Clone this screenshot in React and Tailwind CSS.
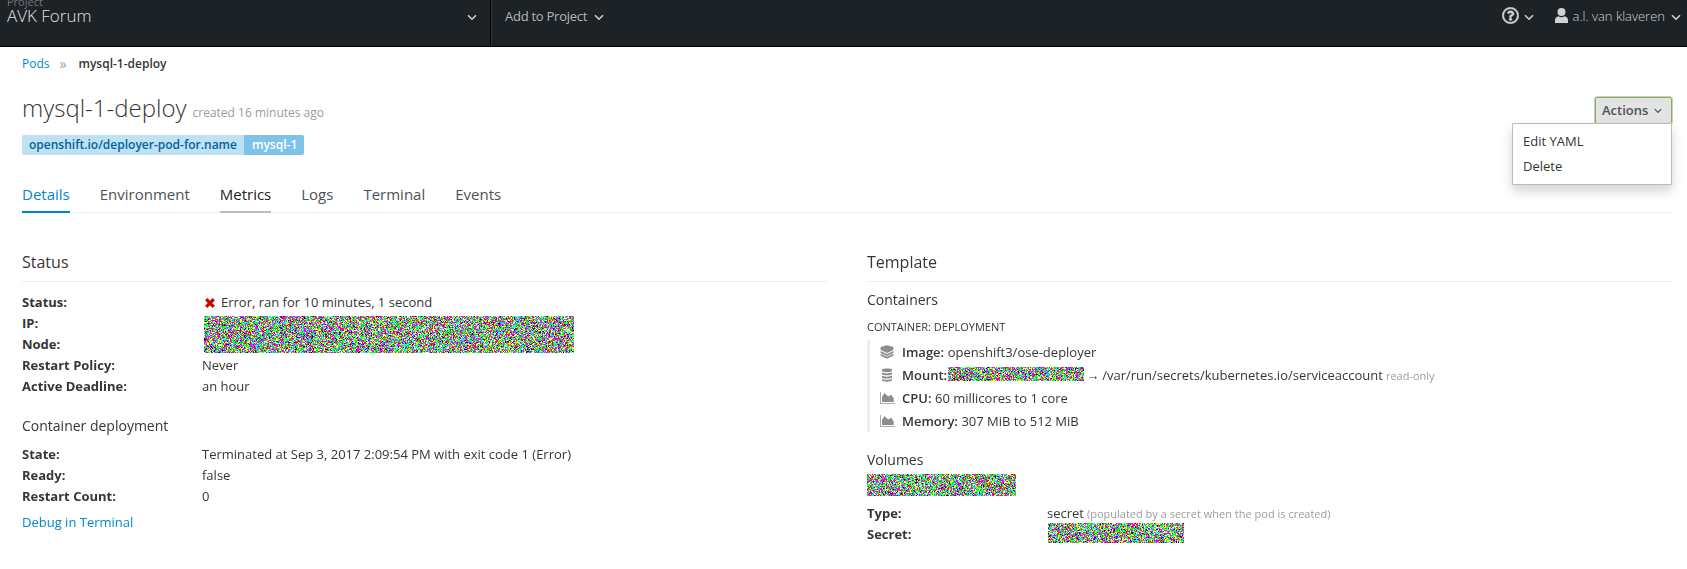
import { useEffect, useRef } from "react";
import { FaRegQuestionCircle } from "react-icons/fa";

const palette = [
  [0.24, 255, 0, 255],
  [0.46, 0, 255, 0],
  [0.65, 0, 255, 255],
  [0.79, 255, 255, 0],
  [0.88, 255, 0, 0],
  [0.92, 0, 0, 255],
  [0.99, 255, 255, 255],
  [1, 0, 0, 0],
];

function Noise({ width, height, seed, className = "" }) {
  const ref = useRef(null);
  useEffect(() => {
    const ctx = ref.current.getContext("2d");
    const image = ctx.createImageData(width, height);
    let state = seed;
    const next = () => {
      state = (Math.imul(state, 1664525) + 1013904223) >>> 0;
      return state / 4294967296;
    };
    for (let i = 0; i < image.data.length; i += 4) {
      const value = next();
      const color = palette.find((entry) => value < entry[0]);
      image.data[i] = color[1];
      image.data[i + 1] = color[2];
      image.data[i + 2] = color[3];
      image.data[i + 3] = 255;
    }
    ctx.putImageData(image, 0, 0);
  }, [width, height, seed]);
  return <canvas ref={ref} width={width} height={height} className={`block shrink-0 [image-rendering:pixelated] ${className}`} />;
}

function Chevron({ className = "h-[7px] w-[10px]" }) {
  return (
    <svg viewBox="0 0 10 7" className={`shrink-0 ${className}`} fill="none" stroke="currentColor" strokeWidth="1.6">
      <path d="M1 1.2 5 5.2 9 1.2" />
    </svg>
  );
}

function LayersIcon() {
  return (
    <svg viewBox="0 0 14 14" className="h-[14px] w-[14px]" fill="#8b8d8f">
      <path d="M7 .2 13.400 2v3L7 7.900.600 5V2z" />
      <path d="M.600 6 7 9l6.400-3v2L7 11 .600 8z" />
      <path d="M.600 8.800 7 11.800l6.400-3v2L7 13.800.600 10.800z" />
    </svg>
  );
}

function DatabaseIcon() {
  return (
    <svg viewBox="0 0 14 14" className="h-[14px] w-[14px]" fill="#8b8d8f">
      <path d="M2 1.500C2 0 12 0 12 1.500v1.600c0 1.400-10 1.400-10 0z" />
      <path d="M2 4.600c1.500 1.100 8.500 1.100 10 0v1.600c0 1.500-10 1.500-10 0z" />
      <path d="M2 7.800c1.500 1.100 8.500 1.100 10 0v1.600c0 1.500-10 1.500-10 0z" />
      <path d="M2 11c1.500 1.100 8.500 1.100 10 0v1.500c0 1.500-10 1.500-10 0z" />
    </svg>
  );
}

function ChartIcon() {
  return (
    <svg viewBox="0 0 15 12" className="h-[12px] w-[15px]" fill="#8b8d8f">
      <path d="M0 0h1v11h14v1H0z" opacity=".75" />
      <path d="M2 10V5L4.500 1 8.200 4.600 11.200 2.800l2.600 4V10z" />
    </svg>
  );
}

function Row({ label, children }) {
  return (
    <div className="flex h-[21px] items-center">
      <dt className="w-[180px] shrink-0 font-bold">{label}</dt>
      <dd className="flex items-center">{children}</dd>
    </div>
  );
}

function Spec({ icon, label, children }) {
  return (
    <div className="flex h-[23px] items-center pt-[1px]">
      <span className="-mt-[1px] flex w-[22px] shrink-0 items-center">{icon}</span>
      <span className="font-semibold">{label}</span>
      {children}
    </div>
  );
}

const tabs = ["Details", "Environment", "Metrics", "Logs", "Terminal", "Events"];
const tabStyle = {
  Details: "text-[#0088ce] border-[#0088ce]",
  Metrics: "text-[#222] border-[#bbb]",
};

export default function App() {
  return (
    <div className="h-[569px] w-full overflow-hidden bg-white font-['Open_Sans',sans-serif] text-[13px] leading-[21px] text-[#363636]">
      <header className="flex h-[47px] border-b border-black bg-[#1d2226] text-[#b4b6b8]">
        <div className="flex w-[491px] justify-between border-r border-black pr-[13px] pl-[7px]">
          <div className="-mt-[5px]">
            <div className="h-[14px] text-[11px] leading-[14px] text-[#72767b]">Project</div>
            <div className="-mt-[1px] text-[17px] leading-[16px] font-light text-[#e1e1e1]">AVK Forum</div>
          </div>
          <Chevron className="mt-[14px] h-[7px] w-[10px] text-[#d1d1d1]" />
        </div>
        <div className="flex flex-1 border-l border-[#35393d] pr-[6px] pl-[13px]">
          <span className="mt-[6px] tracking-[-0.02em]">Add to Project</span>
          <Chevron className="mt-[14px] ml-[7px] h-[7px] w-[10px] text-[#d1d1d1]" />
          <div className="ml-auto flex">
            <FaRegQuestionCircle className="mt-[7px] h-[17px] w-[17px] text-[#d1d1d1]" stroke="currentColor" strokeWidth="14" />
            <Chevron className="mt-[14px] ml-[5px] h-[7px] w-[10px] text-[#d1d1d1]" />
            <svg viewBox="0 0 13 15" className="mt-[8px] ml-[21px] h-[15px] w-[13px]" fill="#d1d1d1">
              <circle cx="6.500" cy="4" r="4" />
              <path d="M0 15v-3c0-2 1.500-3.500 3.500-3.800 1.800 1.300 4.200 1.300 6 0C11.500 8.500 13 10 13 12v3z" />
            </svg>
            <span className="mt-[6px] ml-[5px] font-light text-[#d1d1d1]">a.l. van klaveren</span>
            <Chevron className="mt-[14px] ml-[6px] h-[7px] w-[10px] text-[#d1d1d1]" />
          </div>
        </div>
      </header>

      <main className="pr-[15px] pl-[22px]">
        <nav className="flex pt-[6px] text-[12px]">
          <a className="text-[#0088ce]">Pods</a>
          <span className="ml-[10px] text-[14px] text-[#9c9c9c]">»</span>
          <span className="ml-[12px] font-semibold">mysql-1-deploy</span>
        </nav>

        <div className="flex justify-between pt-[19px]">
          <div>
            <h1 className="flex h-[30px] items-baseline text-[24px] leading-[30px] font-light">
              mysql-1-deploy
              <small className="ml-[6px] text-[12px] font-normal text-[#9c9c9c]">created 16 minutes ago</small>
            </h1>
            <div className="mt-[12px] flex h-[20px] text-[12px] leading-[19px] font-semibold">
              <span className="rounded-l-[2px] bg-[#bee1f4] px-[7px] text-[#00659c]">openshift.io/deployer-pod-for.name</span>
              <span className="rounded-r-[2px] bg-[#7dc3e8] pr-[7px] pl-[8px] text-white">mysql-1</span>
            </div>
          </div>
          <div className="relative mt-[4px] h-[28px]">
            <button className="flex h-[27px] w-[77px] items-center rounded-[2px] border border-[#8fa876] bg-[#e3e3e3] pb-[1px] pl-[6px] font-semibold text-[#4d5258] outline-1 outline-[#c3d6b0]">
              Actions
              <Chevron className="mt-[1px] ml-[6px] h-[6px] w-[8px]" />
            </button>
            <ul className="absolute top-[26px] right-0 z-10 h-[62px] w-[160px] rounded-[1px] border border-[#bbb] bg-white pt-[5px] pl-[10px] leading-[25px] shadow-[0_6px_12px_rgba(0,0,0,0.175)]">
              <li>Edit YAML</li>
              <li>Delete</li>
            </ul>
          </div>
        </div>

        <div className="mt-[27px] flex h-[31px] gap-[30px] border-b border-[#ededed] text-[15px] leading-[24px] text-[#4d5258]">
          {tabs.map((tab) => (
            <span key={tab} className={`h-[31px] border-b-2 ${tabStyle[tab] || "border-transparent"}`}>
              {tab}
            </span>
          ))}
        </div>

        <div className="grid grid-cols-2 gap-[40px]">
          <section>
            <h2 className="mt-[37px] h-[32px] border-b border-[#ededed] text-[16px] leading-[24px]">Status</h2>
            <dl className="mt-[10px]">
              <Row label="Status:">
                <svg viewBox="0 0 10 10" className="mr-[6px] ml-[3px] h-[10px] w-[10px]" stroke="#c00" strokeWidth="3.2">
                  <path d="M1.200 1.200 8.800 8.800M8.800 1.200 1.200 8.800" />
                </svg>
                Error, ran for 10 minutes, 1 second
              </Row>
              <div className="flex items-start">
                <div className="w-[182px]">
                  <Row label="IP:" />
                  <Row label="Node:" />
                </div>
                <Noise width={370} height={37} seed={17} className="mt-[3px]" />
              </div>
              <Row label="Restart Policy:">Never</Row>
              <Row label="Active Deadline:">an hour</Row>
            </dl>
            <h3 className="mt-[18px] text-[14px]">Container deployment</h3>
            <dl className="mt-[8px]">
              <Row label="State:">Terminated at Sep 3, 2017 2:09:54 PM with exit code 1 (Error)</Row>
              <Row label="Ready:">false</Row>
              <Row label="Restart Count:">0</Row>
            </dl>
            <a className="mt-[5px] block text-[#0088ce]">Debug in Terminal</a>
          </section>

          <section>
            <h2 className="mt-[37px] h-[32px] border-b border-[#ededed] text-[16px] leading-[24px]">Template</h2>
            <h3 className="mt-[7px] text-[14px]">Containers</h3>
            <h4 className="mt-[6px] text-[11px] uppercase">Container: deployment</h4>
            <div className="mt-[3px] border-l-3 border-[#ededed] pl-[10px]">
              <Spec icon={<LayersIcon />} label="Image:">
                <span className="ml-[3.5px]">openshift3/ose-deployer</span>
              </Spec>
              <Spec icon={<DatabaseIcon />} label="Mount:">
                <Noise width={136} height={14} seed={91} className="-mt-[3px] ml-[1px]" />
                <span className="ml-[3px]">
                  <span className="-ml-[1px] inline-block w-[16px]">→</span>/var/run/secrets/kubernetes.io/serviceaccount
                </span>
                <small className="ml-[3px] text-[11px] text-[#9c9c9c]">read-only</small>
              </Spec>
              <Spec icon={<ChartIcon />} label="CPU:">
                <span className="ml-[3.5px]">60 millicores to 1 core</span>
              </Spec>
              <Spec icon={<ChartIcon />} label="Memory:">
                <span className="ml-[3.5px]">307 MiB to 512 MiB</span>
              </Spec>
            </div>
            <h3 className="mt-[17px] text-[14px]">Volumes</h3>
            <Noise width={149} height={22} seed={233} className="mt-[4px]" />
            <dl className="mt-[7px]">
              <Row label="Type:">
                secret
                <small className="ml-[3px] text-[11px] text-[#9c9c9c]">(populated by a secret when the pod is created)</small>
              </Row>
              <Row label="Secret:">
                <Noise width={136} height={20} seed={777} className="-mt-[3px] ml-[1px]" />
              </Row>
            </dl>
          </section>
        </div>
      </main>
    </div>
  );
}
